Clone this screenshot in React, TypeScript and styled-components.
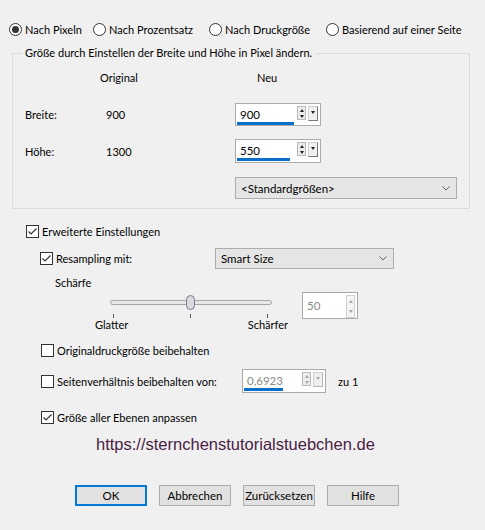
import styled, { createGlobalStyle } from "styled-components";

const GlobalStyle = createGlobalStyle`
  html, body {
    margin: 0;
    padding: 0;
    background: #f0f0f0;
  }
  body {
    font-family: Lato, "Noto Sans", sans-serif;
    font-size: 11px;
    color: #000;
  }
`;

const Dialog = styled.div`
  width: 485px;
  height: 530px;
  box-sizing: border-box;
  padding-top: 21px;
  overflow: hidden;
`;

const RadioRow = styled.div`
  display: grid;
  grid-template-columns: 84px 116px 117px 1fr;
  padding-left: 9px;
  height: 16px;
  align-items: center;
`;

const Option = styled.label`
  display: flex;
  align-items: center;
  gap: 3px;
  white-space: nowrap;
`;

const RadioDot = styled.span<{ $on?: boolean }>`
  width: 13px;
  height: 13px;
  box-sizing: border-box;
  border: 1px solid #333;
  border-radius: 50%;
  background: #fff;
  display: flex;
  align-items: center;
  justify-content: center;
  &::after {
    content: "";
    width: 7px;
    height: 7px;
    border-radius: 50%;
    background: ${(p) => (p.$on ? "#333" : "transparent")};
  }
`;

const Group = styled.fieldset`
  margin: 8px 0 0 12px;
  width: 458px;
  box-sizing: border-box;
  border: 1px solid #dcdcdc;
  padding: 0 0 9px 12px;
  min-width: 0;
`;

const Legend = styled.legend`
  padding: 0 3px;
  margin-left: -3px;
  line-height: 16px;
`;

const GroupGrid = styled.div`
  display: grid;
  grid-template-columns: 81px 129px 1fr;
  align-items: center;
`;

const HeadCell = styled.div<{ $col: number }>`
  grid-column: ${(p) => p.$col};
  margin-top: 9px;
  height: 16px;
  line-height: 16px;
  padding-left: ${(p) => (p.$col === 2 ? "0" : "22px")};
  ${(p) => (p.$col === 2 ? "margin-left: -6px;" : "")}
`;

const RowLabel = styled.div<{ $top: number }>`
  margin-top: ${(p) => p.$top}px;
`;

const Cell = styled.div<{ $top: number; $col?: number }>`
  margin-top: ${(p) => p.$top}px;
  ${(p) => (p.$col ? `grid-column: ${p.$col};` : "")}
`;

const SpinBox = styled.div<{ $w: number; $h: number; $disabled?: boolean }>`
  width: ${(p) => p.$w}px;
  height: ${(p) => p.$h}px;
  box-sizing: border-box;
  border: 1px solid ${(p) => (p.$disabled ? "#a9a9a9" : "#acacac")};
  background: #fff;
  display: flex;
  align-items: flex-start;
  padding: 1px 2px 0 1px;
  gap: 2px;
`;

const SpinField = styled.div`
  flex: 1;
  display: flex;
  flex-direction: column;
`;

const SpinText = styled.span<{ $disabled?: boolean; $pad?: number }>`
  padding: ${(p) => p.$pad ?? 3}px 0 0 3px;
  line-height: 14px;
  font-size: 11.5px;
  color: ${(p) => (p.$disabled ? "#8a8a8a" : "#000")};
`;

const ProgressBar = styled.div<{ $fill: number }>`
  width: ${(p) => p.$fill}px;
  height: 3px;
  background: #0a6fc9;
`;

const ArrowStack = styled.div<{ $tall?: boolean }>`
  width: 9px;
  height: ${(p) => (p.$tall ? 23 : 14)}px;
  margin-top: 1px;
  box-sizing: border-box;
  border: 1px solid ${(p) => (p.$tall ? "#cfcfcf" : "#b8b8b8")};
  background: ${(p) => (p.$tall ? "#f4f4f4" : "#ececec")};
  display: flex;
  flex-direction: column;
  align-items: center;
  justify-content: space-around;
`;

const Tri = styled.span<{ $dir: "up" | "down"; $dim?: boolean }>`
  width: 0;
  height: 0;
  border-left: 2.5px solid transparent;
  border-right: 2.5px solid transparent;
  ${(p) =>
    p.$dir === "up"
      ? `border-bottom: 3px solid ${p.$dim ? "#a8a8a8" : "#222"};`
      : `border-top: 3px solid ${p.$dim ? "#a8a8a8" : "#222"};`}
`;

const DropBtn = styled.div<{ $dim?: boolean }>`
  width: 10px;
  height: 15px;
  margin-top: 1px;
  box-sizing: border-box;
  border: 1px solid #d0d0d0;
  border-right-color: ${(p) => (p.$dim ? "#b5b5b5" : "#777")};
  border-bottom-color: ${(p) => (p.$dim ? "#b5b5b5" : "#777")};
  background: #f0f0f0;
  display: flex;
  justify-content: center;
  padding-top: 4px;
`;

const Select = styled.div<{ $w: number; $h: number }>`
  width: ${(p) => p.$w}px;
  height: ${(p) => p.$h}px;
  box-sizing: border-box;
  border: 1px solid #adadad;
  background: #e5e5e5;
  display: flex;
  align-items: center;
  justify-content: space-between;
  padding: 0 6px 0 5px;
  font-size: 11.5px;
`;

const Chevron = () => (
  <svg width="8" height="5" viewBox="0 0 8 5">
    <polyline points="0.5,0.5 4,4 7.5,0.5" fill="none" stroke="#606060" strokeWidth="1" />
  </svg>
);

const CheckRow = styled.div<{ $left: number; $top: number }>`
  display: flex;
  align-items: center;
  margin: ${(p) => p.$top}px 0 0 ${(p) => p.$left}px;
  height: 16px;
`;

const Box = styled.span`
  width: 13px;
  height: 13px;
  box-sizing: border-box;
  border: 1px solid #333;
  background: #fff;
  margin-right: 3px;
  display: flex;
  align-items: center;
  justify-content: center;
`;

const CheckBox = ({ on }: { on?: boolean }) => (
  <Box>
    {on && (
      <svg width="11" height="11" viewBox="0 0 11 11">
        <polyline points="1.5,5.5 4,8 9.5,2.5" fill="none" stroke="#333" strokeWidth="1.2" />
      </svg>
    )}
  </Box>
);

const ResampleRow = styled.div`
  display: flex;
  align-items: center;
  margin: 9px 0 0 40px;
  height: 20px;
`;

const ResampleCheck = styled.div`
  display: flex;
  align-items: center;
  width: 175px;
`;

const SharpLabel = styled.div`
  margin: 7px 0 0 55px;
  height: 16px;
  line-height: 16px;
`;

const SliderRow = styled.div`
  display: flex;
  align-items: flex-start;
  margin: 1px 0 0 95px;
`;

const SliderArea = styled.div`
  width: 193px;
  display: flex;
  flex-direction: column;
`;

const SliderLabels = styled.div`
  display: flex;
  justify-content: space-between;
  line-height: 14px;
  margin-top: -1px;
`;

const ValueSpin = styled.div`
  margin-left: 14px;
`;

const AspectRow = styled.div`
  display: flex;
  align-items: center;
  margin: 11px 0 0 41px;
  height: 24px;
`;

const AspectCheck = styled.div`
  display: flex;
  align-items: center;
  width: 201px;
`;

const Ratio = styled.span`
  margin-left: 12px;
`;

const Url = styled.div`
  margin: 9px 0 0 96px;
  font-family: "Liberation Sans", Arial, sans-serif;
  font-size: 16.5px;
  color: #4a1d44;
  height: 20px;
  line-height: 20px;
`;

const ButtonBar = styled.div`
  display: flex;
  gap: 12px;
  margin: 31px 0 0 75px;
`;

const Button = styled.button<{ $primary?: boolean }>`
  width: 72px;
  height: 21px;
  box-sizing: border-box;
  border: ${(p) => (p.$primary ? "2px solid #0078d7" : "1px solid #adadad")};
  background: #e1e1e1;
  font-family: inherit;
  font-size: 11.5px;
  color: #000;
  padding: 0;
`;

const Slider = () => (
  <svg width="193" height="27" viewBox="0 0 193 27">
    <rect x="15.5" y="8.5" width="161" height="4" rx="2" fill="#e7e7e7" stroke="#a6a6a6" />
    <rect x="91.5" y="3.5" width="8" height="14" rx="4" fill="#d9d9e2" stroke="#7c7c88" />
    <line x1="18.5" y1="22" x2="18.5" y2="26" stroke="#555" />
    <line x1="95.5" y1="22" x2="95.5" y2="26" stroke="#555" />
    <line x1="172.5" y1="22" x2="172.5" y2="26" stroke="#555" />
  </svg>
);

export default function App() {
  return (
    <>
      <GlobalStyle />
      <Dialog>
        <RadioRow>
          <Option>
            <RadioDot $on />
            Nach Pixeln
          </Option>
          <Option>
            <RadioDot />
            Nach Prozentsatz
          </Option>
          <Option>
            <RadioDot />
            Nach Druckgröße
          </Option>
          <Option>
            <RadioDot />
            Basierend auf einer Seite
          </Option>
        </RadioRow>

        <Group>
          <Legend>Größe durch Einstellen der Breite und Höhe in Pixel ändern.</Legend>
          <GroupGrid>
            <HeadCell $col={2}>Original</HeadCell>
            <HeadCell $col={3}>Neu</HeadCell>

            <RowLabel $top={17}>Breite:</RowLabel>
            <Cell $top={17}>900</Cell>
            <Cell $top={17}>
              <SpinBox $w={86} $h={23}>
                <SpinField>
                  <SpinText>900</SpinText>
                  <ProgressBar $fill={57} />
                </SpinField>
                <ArrowStack>
                  <Tri $dir="up" />
                  <Tri $dir="down" />
                </ArrowStack>
                <DropBtn>
                  <Tri $dir="down" />
                </DropBtn>
              </SpinBox>
            </Cell>

            <RowLabel $top={13}>Höhe:</RowLabel>
            <Cell $top={13}>1300</Cell>
            <Cell $top={13}>
              <SpinBox $w={86} $h={24}>
                <SpinField>
                  <SpinText>550</SpinText>
                  <ProgressBar $fill={53} />
                </SpinField>
                <ArrowStack>
                  <Tri $dir="up" />
                  <Tri $dir="down" />
                </ArrowStack>
                <DropBtn>
                  <Tri $dir="down" />
                </DropBtn>
              </SpinBox>
            </Cell>

            <Cell $top={14} $col={3}>
              <Select $w={222} $h={22}>
                &lt;Standardgrößen&gt;
                <Chevron />
              </Select>
            </Cell>
          </GroupGrid>
        </Group>

        <CheckRow $left={26} $top={14}>
          <CheckBox on />
          Erweiterte Einstellungen
        </CheckRow>

        <ResampleRow>
          <ResampleCheck>
            <CheckBox on />
            Resampling mit:
          </ResampleCheck>
          <Select $w={179} $h={21}>
            Smart Size
            <Chevron />
          </Select>
        </ResampleRow>

        <SharpLabel>Schärfe</SharpLabel>

        <SliderRow>
          <SliderArea>
            <Slider />
            <SliderLabels>
              <span>Glatter</span>
              <span>Schärfer</span>
            </SliderLabels>
          </SliderArea>
          <ValueSpin>
            <SpinBox $w={56} $h={27} $disabled>
              <SpinField>
                <SpinText $disabled $pad={5}>50</SpinText>
              </SpinField>
              <ArrowStack $tall>
                <Tri $dir="up" $dim />
                <Tri $dir="down" $dim />
              </ArrowStack>
            </SpinBox>
          </ValueSpin>
        </SliderRow>

        <CheckRow $left={41} $top={10}>
          <CheckBox />
          Originaldruckgröße beibehalten
        </CheckRow>

        <AspectRow>
          <AspectCheck>
            <CheckBox />
            Seitenverhältnis beibehalten von:
          </AspectCheck>
          <SpinBox $w={84} $h={24} $disabled>
            <SpinField>
              <SpinText $disabled>0,6923</SpinText>
              <ProgressBar $fill={39} />
            </SpinField>
            <ArrowStack>
              <Tri $dir="up" $dim />
              <Tri $dir="down" $dim />
            </ArrowStack>
            <DropBtn $dim>
              <Tri $dir="down" $dim />
            </DropBtn>
          </SpinBox>
          <Ratio>zu 1</Ratio>
        </AspectRow>

        <CheckRow $left={41} $top={16}>
          <CheckBox on />
          Größe aller Ebenen anpassen
        </CheckRow>

        <Url>https://sternchenstutorialstuebchen.de</Url>

        <ButtonBar>
          <Button $primary>OK</Button>
          <Button>Abbrechen</Button>
          <Button>Zurücksetzen</Button>
          <Button>Hilfe</Button>
        </ButtonBar>
      </Dialog>
    </>
  );
}
